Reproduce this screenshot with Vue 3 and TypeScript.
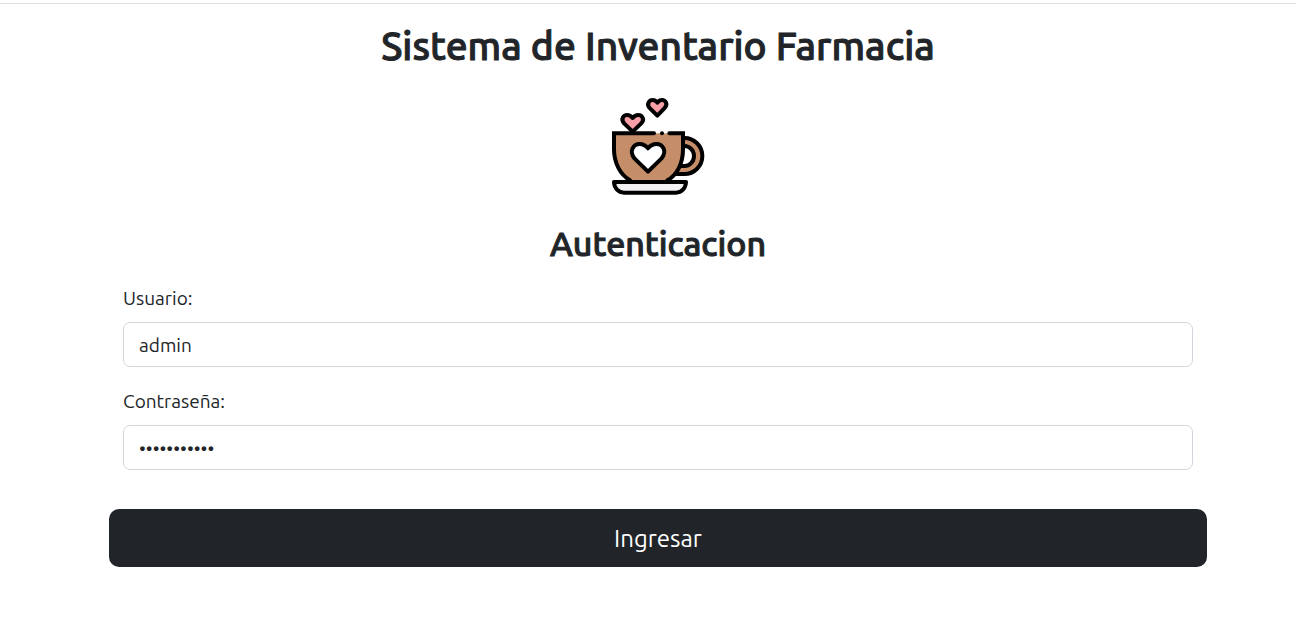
<script setup lang="ts">
import { ref } from 'vue'

const user = ref('admin')
const password = ref('contrasenia')
</script>

<template>
  <main class="page">
    <h1 class="title">Sistema de Inventario Farmacia</h1>
    <svg class="logo" viewBox="27 22 294 294" role="img" aria-label="Taza de café" fill="none" stroke="#000" stroke-width="12" stroke-linecap="round" stroke-linejoin="round">
      <path fill="#c68e68" d="M244 145h9a54 54 0 0 1 0 108h-27l12-24h15a29 30 0 0 0 0-60h-9z" />
      <path fill="#c68e68" stroke="none" d="M42 131h207v48c0 42-18 77-47 93H90c-29-17-48-52-48-93z" />
      <path stroke-linejoin="miter" d="M162 131H42v48c0 41 19 76 48 93M208 131h41v48c0 42-18 77-47 93" />
      <circle cx="186" cy="131" r="6" fill="#000" stroke="none" />
      <path fill="#fff" d="M144 246L104 207C84 182 103 163 119 163c13 0 20 7 25 13 5-6 12-13 25-13 17 0 35 19 15 44z" />
      <path fill="#f99fa7" d="M98 126L73 102C60 87 72 76 81 76c8 0 13 4 17 9 4-5 9-9 17-9 9 0 22 11 8 26z" />
      <path fill="#f99fa7" d="M172 78L150 56C137 42 149 31 158 31c7 0 11 4 14 8 3-4 7-8 14-8 9 0 20 11 7 25z" />
      <path fill="#f4f1f5" stroke-linejoin="round" d="M42 277h216c-1 19-13 32-30 32H72c-17 0-29-13-30-32z" />
    </svg>
    <h2 class="subtitle">Autenticacion</h2>
    <form class="form" @submit.prevent>
      <div class="field">
        <label for="user">Usuario:</label>
        <input id="user" v-model="user" type="text" autocomplete="username" />
      </div>
      <div class="field">
        <label for="password">Contraseña:</label>
        <input id="password" v-model="password" type="password" autocomplete="current-password" />
      </div>
      <button type="submit" class="submit">Ingresar</button>
    </form>
  </main>
</template>

<style>
body {
  background: #fff;
}
</style>

<style scoped>
.page {
  box-sizing: border-box;
  margin-top: 3px;
  padding: 18px 89px 48px 109px;
  border-top: 1px solid #dee0e2;
  display: flex;
  flex-direction: column;
  align-items: center;
  color: #212529;
  font-family: Ubuntu, "Noto Sans", "Open Sans", sans-serif;
}
.title,
.subtitle {
  margin: 0;
  font-weight: 500;
  text-align: center;
  -webkit-text-stroke: 1px currentColor;
}
.title {
  font-size: 39px;
  line-height: 48px;
}
.logo {
  width: 98px;
  height: 98px;
  margin: 27px 0;
}
.subtitle {
  font-size: 34px;
  line-height: 42px;
}
.form {
  width: 100%;
  margin-top: 20px;
}
.field {
  display: flex;
  flex-direction: column;
  gap: 10px;
  margin: 0 14px 20px;
  font-size: 19px;
  line-height: 28px;
}
.field input {
  box-sizing: border-box;
  width: 100%;
  height: 45px;
  padding: 0 15px;
  border: 1px solid #d2d6dc;
  border-radius: 7px;
  background: #fff;
  color: inherit;
  font: inherit;
}
.submit {
  width: 100%;
  height: 58px;
  margin-top: 19px;
  border: 0;
  border-radius: 10px;
  background: #212529;
  color: #fff;
  font-family: inherit;
  font-size: 24px;
  cursor: pointer;
}
</style>
